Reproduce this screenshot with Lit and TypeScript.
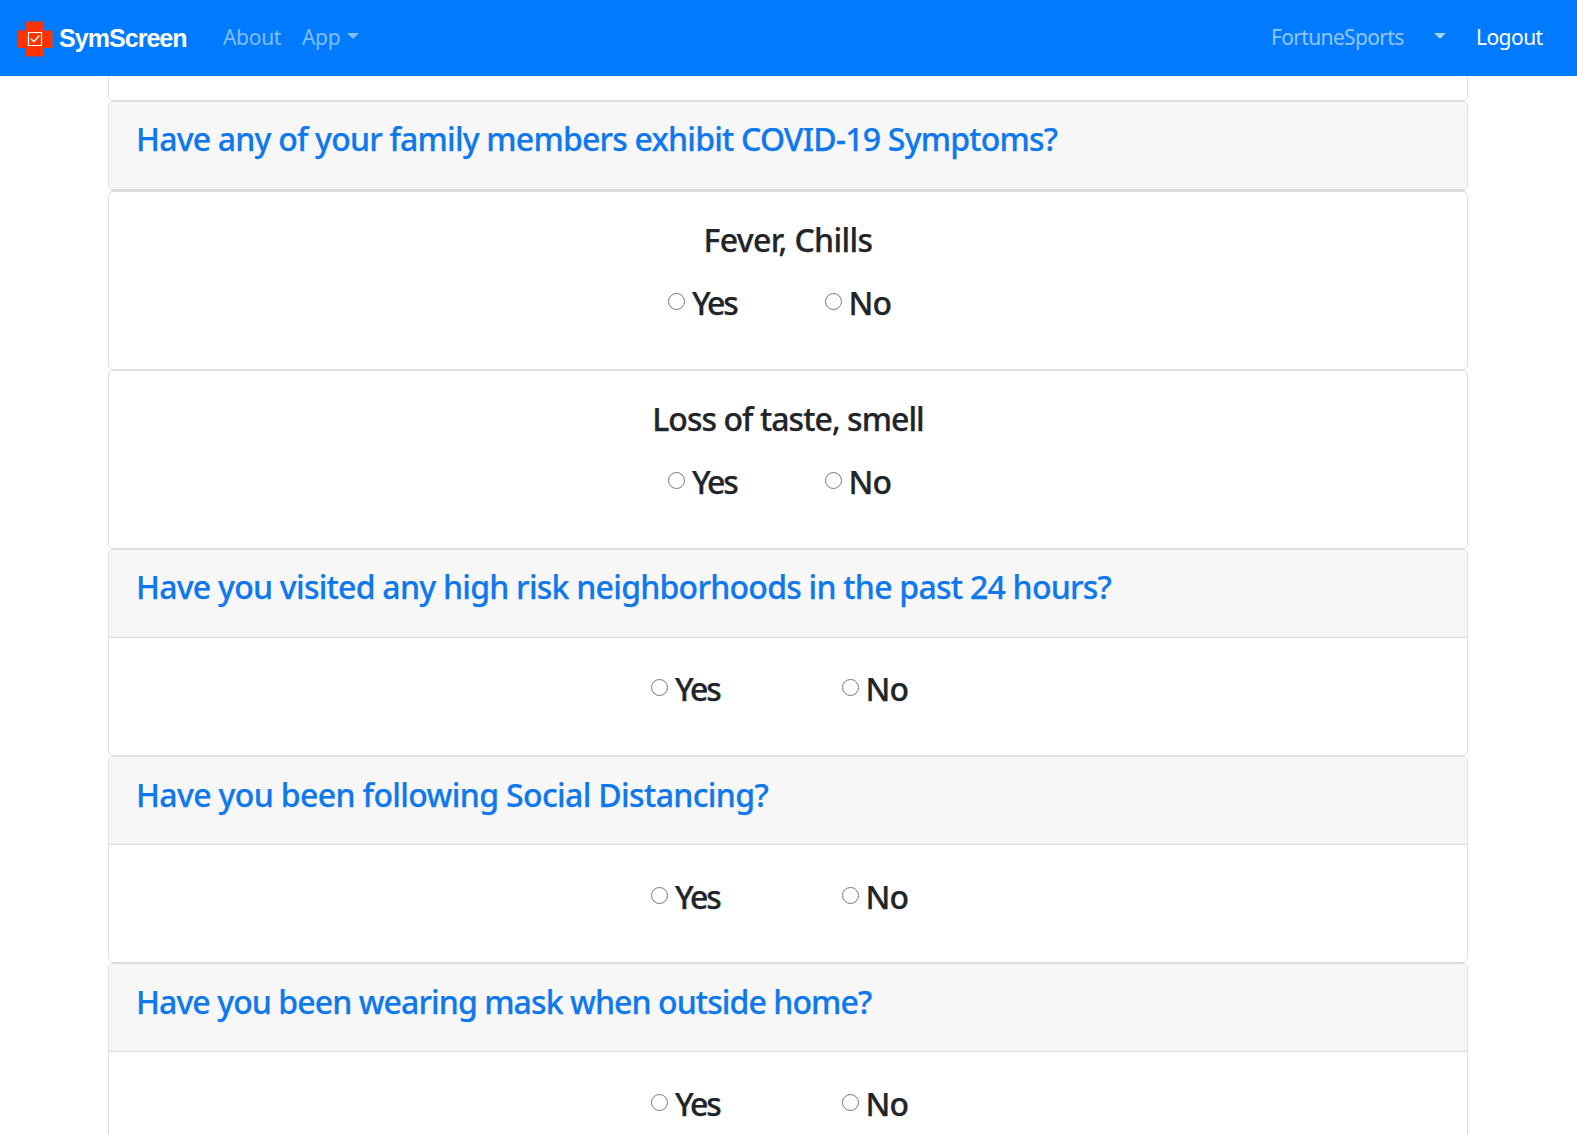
import { LitElement, html, css } from "lit";
import { customElement, property } from "lit/decorators.js";
import { styleMap } from "lit/directives/style-map.js";
import { classMap } from "lit/directives/class-map.js";

const sans = css`"Noto Sans", "Open Sans", sans-serif`;

@customElement("yes-no")
class YesNo extends LitElement {
  @property() name = "";
  static styles = css`
    :host { display: grid; grid-template-columns: var(--pitch, 157px) 83px; justify-content: center; }
    .option { display: flex; align-items: flex-start; font: 500 32px/44px ${sans}; -webkit-text-stroke: 0.25px; white-space: nowrap; }
    .dot { appearance: none; box-sizing: border-box; width: 17px; height: 17px; margin: 12px 7px 0 0; border: 1px solid #767676; border-radius: 50%; background: #fff; flex: none; }
    .dot:checked { border: 5px solid #0075ff; }
    .yes { letter-spacing: -2.1px; }
    .no { letter-spacing: -0.8px; margin-left: -0.5px; }
  `;
  render() {
    return html`
      <label class="option"><input class="dot" type="radio" name=${this.name} /><span class="yes">Yes</span></label>
      <label class="option"><input class="dot" type="radio" name=${this.name} /><span class="no">No</span></label>
    `;
  }
}

interface Item {
  text: string;
  key: string;
  tracking: number;
  low?: boolean;
}

const family: Item = { text: "Have any of your family members exhibit COVID-19 Symptoms?", key: "family", tracking: -0.8 };

const symptoms: Item[] = [
  { text: "Fever, Chills", key: "fever", tracking: -0.63 },
  { text: "Loss of taste, smell", key: "taste", tracking: -0.95 },
];

const questions: Item[] = [
  { text: "Have you visited any high risk neighborhoods in the past 24 hours?", key: "risk", tracking: -0.75 },
  { text: "Have you been following Social Distancing?", key: "distance", tracking: -0.64, low: true },
  { text: "Have you been wearing mask when outside home?", key: "mask", tracking: -0.92, low: true },
];

const track = (i: Item) => styleMap({ letterSpacing: `${i.tracking}px` });

@customElement("app-root")
class AppRoot extends LitElement {
  static styles = css`
    :host { display: block; height: 1134px; overflow: hidden; background: #fff; color: #212529; font-family: ${sans}; }
    * { box-sizing: border-box; }
    .nav { display: flex; align-items: flex-start; height: 76px; padding: 0 34px 0 17px; background: #007bff; font-size: 21px; line-height: 28px; white-space: nowrap; }
    .logo { width: 36px; height: 36px; margin-top: 21px; flex: none; }
    .brand { width: 164px; margin: 23px 0 0 6px; color: #fff; font: 700 25px/30px "Liberation Sans", sans-serif; letter-spacing: -0.95px; }
    .link { margin-top: 23px; color: rgba(255, 255, 255, 0.5); letter-spacing: -0.3px; }
    .about { width: 79px; }
    .app { width: 45px; }
    .caret { margin-top: 33px; border: 6px solid transparent; border-top-color: rgba(255, 255, 255, 0.5); border-bottom: 0; }
    .org { margin-left: auto; width: 163px; letter-spacing: -0.65px; color: rgba(255, 255, 255, 0.58); }
    .org-caret { margin-right: 30px; border-top-color: rgba(255, 255, 255, 0.65); }
    .logout { width: 67px; color: #fff; letter-spacing: -0.55px; }
    .list { width: 1360px; margin-left: 108px; }
    .card { border: 1px solid #dfdfdf; border-radius: 5px; background: #fff; overflow: hidden; }
    .tail { height: 25px; border-top: 0; border-radius: 0 0 5px 5px; }
    .head { height: 88px; padding: 16px 27px 0; background: #f7f7f7; border-bottom: 1px solid #dcdcdc; }
    .title { margin: 0; font-size: 32px; font-weight: 500; line-height: 42px; color: #0f78ec; white-space: nowrap; -webkit-text-stroke: 0.25px; }
    .symptom { height: 179px; padding-top: 26px; text-align: center; }
    .name { margin: 0 0 19px; font-size: 32px; font-weight: 500; line-height: 44px; -webkit-text-stroke: 0.25px; }
    .answer { height: 117px; padding-top: 29px; --pitch: 191px; }
    .low .head { padding-top: 17px; }
    .low .answer { padding-top: 30px; }
  `;
  head(item: Item) {
    return html`<div class="head"><h4 class="title" style=${track(item)}>${item.text}</h4></div>`;
  }
  render() {
    return html`
      <nav class="nav">
        <svg class="logo" viewBox="0 0 36 36">
          <path d="M9 .5h18v9h8.500v17.500H27v8.500H9V27H.5V9.500H9z" fill="#ff3300" />
          <path d="M11.500 11.500h13v13h-13z" fill="none" stroke="#fff" stroke-width="1.200" />
          <path d="M14 17.800l2.900 3 5.300-6" fill="none" stroke="#fff" stroke-width="1.400" />
        </svg>
        <span class="brand">SymScreen</span>
        <span class="link about">About</span>
        <span class="link app">App</span>
        <span class="caret"></span>
        <span class="link org">FortuneSports</span>
        <span class="caret org-caret"></span>
        <span class="link logout">Logout</span>
      </nav>
      <main class="list">
        <div class="card tail"></div>
        <div class="card">${this.head(family)}</div>
        ${symptoms.map(
          (s) => html`<div class="card symptom"><h4 class="name" style=${track(s)}>${s.text}</h4><yes-no name=${s.key}></yes-no></div>`
        )}
        ${questions.map(
          (q) => html`<div class=${classMap({ card: true, low: !!q.low })}>${this.head(q)}<div class="answer"><yes-no name=${q.key}></yes-no></div></div>`
        )}
      </main>
    `;
  }
}
